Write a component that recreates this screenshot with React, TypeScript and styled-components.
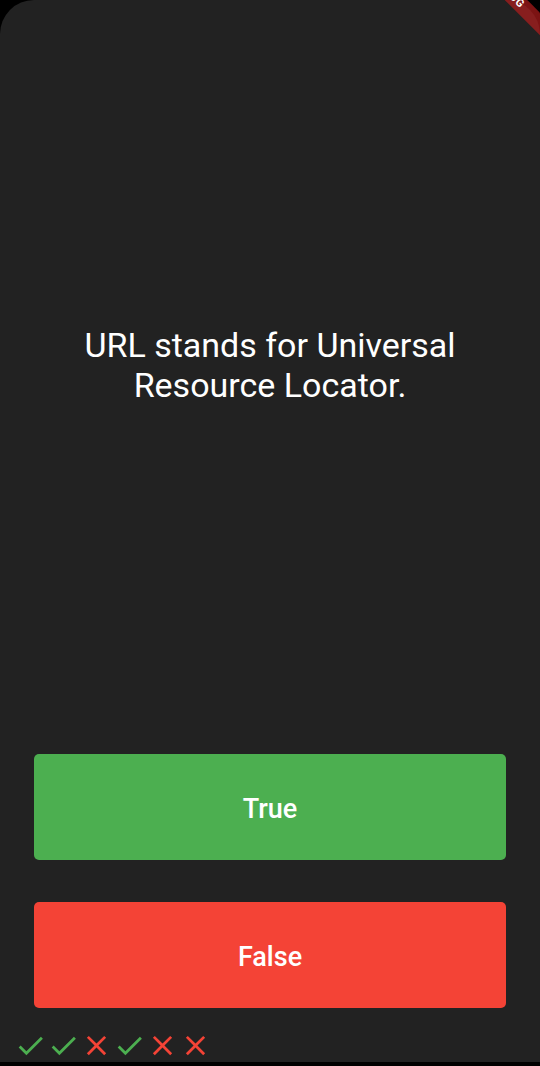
import React from "react";
import styled, { createGlobalStyle } from "styled-components";
import { MdCheck, MdClose } from "react-icons/md";

const GlobalStyle = createGlobalStyle`
  html, body {
    margin: 0;
    padding: 0;
    background: #000;
    overflow: hidden;
  }
  body {
    font-family: Roboto, "Noto Sans", "Liberation Sans", sans-serif;
  }
`;

const Screen = styled.div`
  position: relative;
  width: 540px;
  height: 1062px;
  background: #222222;
  border-radius: 34px 34px 0 0;
  display: flex;
  flex-direction: column;
`;

const QuestionArea = styled.div`
  flex: 1;
  display: flex;
  align-items: center;
  justify-content: center;
  padding: 0 34px 24px;
`;

const QuestionText = styled.p`
  margin: 0;
  color: #ffffff;
  font-size: 34px;
  line-height: 40px;
  font-weight: 400;
  text-align: center;
  max-width: 420px;
`;

const ButtonSlot = styled.div<{ $bottom: number }>`
  padding: 0 34px ${(p) => p.$bottom}px;
`;

const AnswerButton = styled.button<{ $color: string }>`
  display: flex;
  align-items: center;
  justify-content: center;
  width: 100%;
  height: 106px;
  padding: 3px 0 0;
  border: none;
  border-radius: 5px;
  background: ${(p) => p.$color};
  color: #ffffff;
  font-family: Roboto, "Noto Sans", sans-serif;
  font-size: 27px;
  font-weight: 500;
  cursor: pointer;
`;

const ScoreRow = styled.div`
  display: flex;
  align-items: center;
  height: 33px;
  padding-left: 14px;
`;

const ScoreIcon = styled.span<{ $color: string }>`
  display: flex;
  width: 33px;
  height: 33px;
  color: ${(p) => p.$color};
  svg {
    width: 33px;
    height: 33px;
  }
`;

const BannerClip = styled.div`
  position: absolute;
  top: 0;
  right: 0;
  width: 60px;
  height: 60px;
  overflow: hidden;
  border-top-right-radius: 14px;
  pointer-events: none;
`;

const Ribbon = styled.div`
  position: absolute;
  width: 160px;
  height: 16px;
  left: ${509 - 480 - 80}px;
  top: ${-7 - 8}px;
  transform: rotate(45deg);
  background: rgba(183, 28, 28, 0.68);
  color: #ffffff;
  font-family: Roboto, "Noto Sans", sans-serif;
  font-size: 11px;
  line-height: 16px;
  font-weight: 700;
  letter-spacing: 0.4px;
  display: flex;
  align-items: center;
  justify-content: center;
`;

const GREEN = "#4caf50";
const RED = "#f44336";

const scores: boolean[] = [true, true, false, true, false, false];

export default function App() {
  return (
    <>
      <GlobalStyle />
      <Screen>
        <QuestionArea>
          <QuestionText>URL stands for Universal Resource Locator.</QuestionText>
        </QuestionArea>
        <ButtonSlot $bottom={42}>
          <AnswerButton $color={GREEN}>True</AnswerButton>
        </ButtonSlot>
        <ButtonSlot $bottom={21}>
          <AnswerButton $color={RED}>False</AnswerButton>
        </ButtonSlot>
        <ScoreRow>
          {scores.map((ok, i) => (
            <ScoreIcon key={i} $color={ok ? GREEN : RED}>
              {ok ? <MdCheck /> : <MdClose />}
            </ScoreIcon>
          ))}
        </ScoreRow>
        <BannerClip>
          <Ribbon>DEBUG</Ribbon>
        </BannerClip>
      </Screen>
    </>
  );
}
